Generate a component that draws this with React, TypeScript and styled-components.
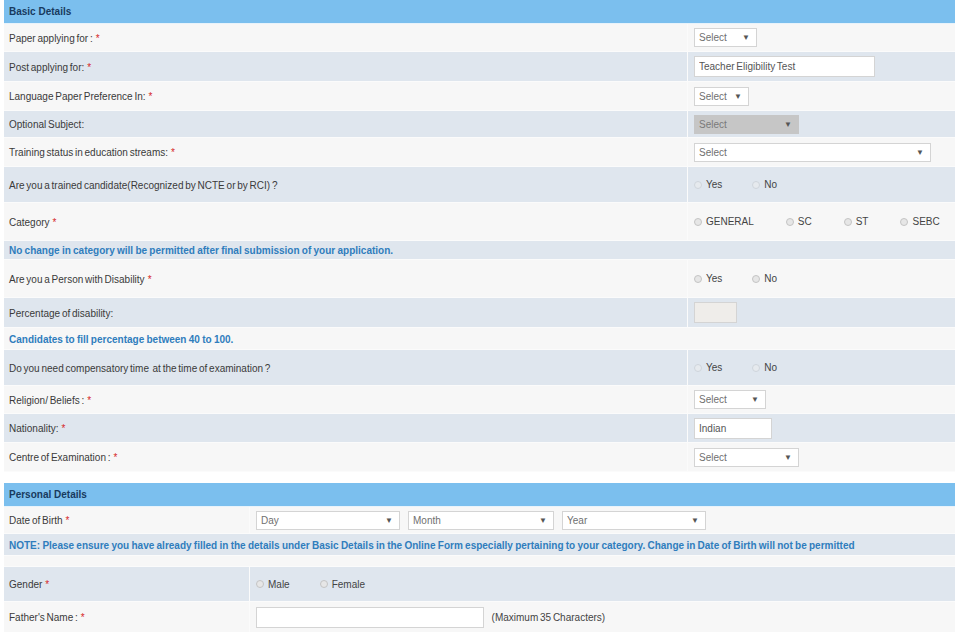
import styled, { createGlobalStyle } from 'styled-components';

const GlobalStyle = createGlobalStyle`
  body {
    margin: 0;
    background: #fff;
    font-family: "Liberation Sans", Arial, sans-serif;
    font-size: 10px;
    word-spacing: -1px;
    color: #3a3a3a;
  }
  * {
    box-sizing: border-box;
  }
`;

const Page = styled.div`
  display: flex;
  flex-direction: column;
  padding-left: 4px;
  width: 955px;
  overflow: hidden;
`;

const SectionHeader = styled.div<{ $top?: number }>`
  display: flex;
  align-items: center;
  height: 24px;
  margin-top: ${(p) => p.$top ?? 0}px;
  padding-left: 5px;
  background: #7bbfee;
  border-bottom: 1px solid #e8f3fb;
  color: #183a5e;
  font-weight: bold;
  word-spacing: 0;
`;

const Row = styled.div<{ $alt?: boolean; $h: number; $split: number }>`
  display: grid;
  grid-template-columns: ${(p) => p.$split}px 1fr;
  height: ${(p) => p.$h}px;
  background: ${(p) => (p.$alt ? '#dfe6ee' : '#f7f7f7')};
  border-bottom: 1px solid #fbfbfb;
`;

const Label = styled.div`
  display: flex;
  align-items: center;
  padding: 1px 0 0 5px;
  border-right: 1px solid #fbfbfb;
`;

const Field = styled.div<{ $gap?: number }>`
  display: flex;
  align-items: center;
  gap: ${(p) => p.$gap ?? 0}px;
  padding-left: 6px;
`;

const Req = styled.span`
  margin-left: 3px;
  color: #d62828;
`;

const NoteRow = styled.div<{ $alt?: boolean; $h: number }>`
  display: flex;
  align-items: center;
  height: ${(p) => p.$h}px;
  padding: 1px 0 0 5px;
  background: ${(p) => (p.$alt ? '#dfe6ee' : '#f7f7f7')};
  border-bottom: 1px solid #fbfbfb;
  color: #2f7dbd;
  font-weight: bold;
  word-spacing: -0.5px;
`;

const SelectBox = styled.div<{ $w: number; $disabled?: boolean }>`
  display: flex;
  align-items: center;
  justify-content: space-between;
  width: ${(p) => p.$w}px;
  height: 19px;
  padding: 0 6px 0 4px;
  background: ${(p) => (p.$disabled ? '#c6c6c6' : '#fff')};
  border: 1px solid ${(p) => (p.$disabled ? '#c6c6c6' : '#d4d4d4')};
  color: ${(p) => (p.$disabled ? '#7a7a7a' : '#707070')};
`;

const Arrow = styled.span`
  font-size: 8px;
  color: #555;
`;

const TextBox = styled.input<{ $w: number; $disabled?: boolean }>`
  width: ${(p) => p.$w}px;
  height: 21px;
  padding: 0 4px;
  border: 1px solid #d4d4d4;
  background: ${(p) => (p.$disabled ? '#efedea' : '#fff')};
  font-family: "Liberation Sans", Arial, sans-serif;
  font-size: 10px;
  word-spacing: -1px;
  color: #555;
  outline: none;
`;

const RadioOption = styled.label<{ $space?: number }>`
  display: flex;
  align-items: center;
  gap: 4px;
  margin-right: ${(p) => p.$space ?? 30}px;
  color: #444;
`;

const Dot = styled.span<{ $faint?: boolean }>`
  width: 8px;
  height: 8px;
  border-radius: 50%;
  border: 1px solid ${(p) => (p.$faint ? '#cfd5dc' : '#c4c4c4')};
  background: ${(p) => (p.$faint ? '#e6eaee' : '#e6e6e6')};
`;

const Hint = styled.span`
  margin-left: 4px;
  color: #444;
`;

function Select({ w, text = 'Select', disabled }: { w: number; text?: string; disabled?: boolean }) {
  return (
    <SelectBox $w={w} $disabled={disabled}>
      <span>{text}</span>
      <Arrow>▼</Arrow>
    </SelectBox>
  );
}

function Radios({ options, faint, space }: { options: string[]; faint?: boolean; space?: number }) {
  return (
    <>
      {options.map((o) => (
        <RadioOption key={o} $space={space}>
          <Dot $faint={faint} />
          {o}
        </RadioOption>
      ))}
    </>
  );
}

const B = 684;
const P = 246;

export default function App() {
  return (
    <Page>
      <GlobalStyle />
      <SectionHeader>Basic Details</SectionHeader>

      <Row $h={28} $split={B}>
        <Label>
          Paper applying for :<Req>*</Req>
        </Label>
        <Field>
          <Select w={63} />
        </Field>
      </Row>
      <Row $alt $h={30} $split={B}>
        <Label>
          Post applying for:<Req>*</Req>
        </Label>
        <Field>
          <TextBox $w={181} value="Teacher Eligibility Test" readOnly />
        </Field>
      </Row>
      <Row $h={29} $split={B}>
        <Label>
          Language Paper Preference In:<Req>*</Req>
        </Label>
        <Field>
          <Select w={55} />
        </Field>
      </Row>
      <Row $alt $h={27} $split={B}>
        <Label>Optional Subject:</Label>
        <Field>
          <Select w={105} disabled />
        </Field>
      </Row>
      <Row $h={29} $split={B}>
        <Label>
          Training status in education streams:<Req>*</Req>
        </Label>
        <Field>
          <Select w={237} />
        </Field>
      </Row>
      <Row $alt $h={36} $split={B}>
        <Label>Are you a trained candidate(Recognized by NCTE or by RCI) ?</Label>
        <Field>
          <Radios options={['Yes', 'No']} faint />
        </Field>
      </Row>
      <Row $h={38} $split={B}>
        <Label>
          Category<Req>*</Req>
        </Label>
        <Field>
          <Radios options={['GENERAL', 'SC', 'ST', 'SEBC']} space={32} />
        </Field>
      </Row>
      <NoteRow $alt $h={19}>
        No change in category will be permitted after final submission of your application.
      </NoteRow>
      <Row $h={38} $split={B}>
        <Label>
          Are you a Person with Disability<Req>*</Req>
        </Label>
        <Field>
          <Radios options={['Yes', 'No']} />
        </Field>
      </Row>
      <Row $alt $h={30} $split={B}>
        <Label>Percentage of disability:</Label>
        <Field>
          <TextBox $w={43} $disabled value="" readOnly />
        </Field>
      </Row>
      <NoteRow $h={22}>Candidates to fill percentage between 40 to 100.</NoteRow>
      <Row $alt $h={36} $split={B}>
        <Label>Do you need compensatory time&nbsp; at the time of examination ?</Label>
        <Field>
          <Radios options={['Yes', 'No']} faint />
        </Field>
      </Row>
      <Row $h={28} $split={B}>
        <Label>
          Religion/ Beliefs :<Req>*</Req>
        </Label>
        <Field>
          <Select w={72} />
        </Field>
      </Row>
      <Row $alt $h={29} $split={B}>
        <Label>
          Nationality:<Req>*</Req>
        </Label>
        <Field>
          <TextBox $w={78} value="Indian" readOnly />
        </Field>
      </Row>
      <Row $h={29} $split={B}>
        <Label>
          Centre of Examination :<Req>*</Req>
        </Label>
        <Field>
          <Select w={105} />
        </Field>
      </Row>

      <SectionHeader $top={11}>Personal Details</SectionHeader>
      <Row $h={27} $split={P}>
        <Label>
          Date of Birth<Req>*</Req>
        </Label>
        <Field $gap={8}>
          <Select w={144} text="Day" />
          <Select w={146} text="Month" />
          <Select w={144} text="Year" />
        </Field>
      </Row>
      <NoteRow $alt $h={22}>
        NOTE: Please ensure you have already filled in the details under Basic Details in the Online Form especially
        pertaining to your category. Change in Date of Birth will not be permitted
      </NoteRow>
      <NoteRow $h={11} />
      <Row $alt $h={35} $split={P}>
        <Label>
          Gender<Req>*</Req>
        </Label>
        <Field>
          <Radios options={['Male', 'Female']} />
        </Field>
      </Row>
      <Row $h={31} $split={P}>
        <Label>
          Father's Name :<Req>*</Req>
        </Label>
        <Field>
          <TextBox $w={228} value="" readOnly />
          <Hint>&nbsp;&nbsp;(Maximum 35 Characters)</Hint>
        </Field>
      </Row>
    </Page>
  );
}
